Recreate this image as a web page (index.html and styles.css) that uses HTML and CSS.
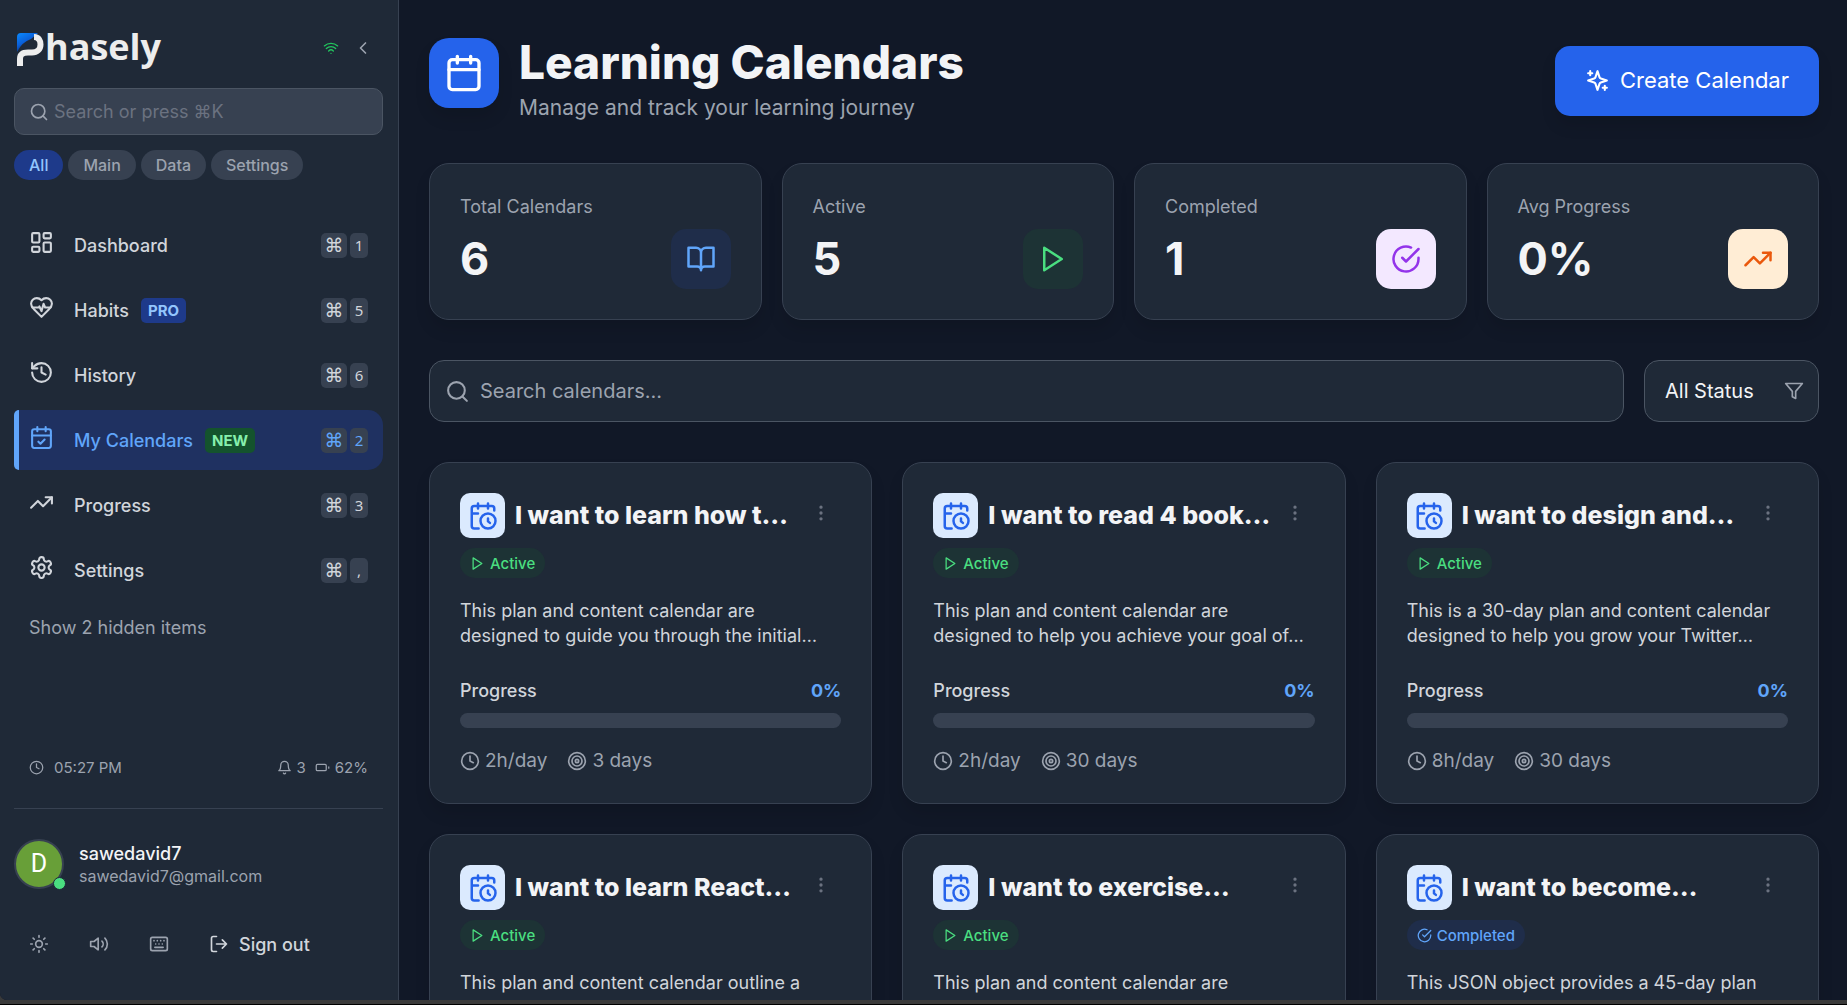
FILE: index.html
```html
<!DOCTYPE html>
<html lang="en">
<head>
<meta charset="utf-8">
<title>Learning Calendars - Phasely</title>
<meta name="viewport" content="width=device-width, initial-scale=1">
<link rel="stylesheet" href="styles.css">
</head>
<body>
<svg class="sprite" aria-hidden="true">
  <symbol id="i-wifi" viewBox="0 0 24 24"><path d="M12 20h.01M2 8.82a15 15 0 0 1 20 0M5 12.86a10 10 0 0 1 14 0M8.5 16.43a5 5 0 0 1 7 0"/></symbol>
  <symbol id="i-left" viewBox="0 0 24 24"><path d="m15 18-6-6 6-6"/></symbol>
  <symbol id="i-search" viewBox="0 0 24 24"><circle cx="11" cy="11" r="8"/><path d="m21 21-4.3-4.3"/></symbol>
  <symbol id="i-dashboard" viewBox="0 0 24 24"><rect x="3" y="3" width="7" height="9" rx="1"/><rect x="14" y="3" width="7" height="5" rx="1"/><rect x="14" y="12" width="7" height="9" rx="1"/><rect x="3" y="16" width="7" height="5" rx="1"/></symbol>
  <symbol id="i-heart" viewBox="0 0 24 24"><path d="M19 14c1.49-1.46 3-3.21 3-5.5A5.5 5.5 0 0 0 16.5 3c-1.76 0-3 .5-4.5 2-1.5-1.5-2.74-2-4.5-2A5.5 5.5 0 0 0 2 8.5c0 2.3 1.5 4.05 3 5.5l7 7Z"/><path d="M3.22 12H9.5l.5-1 2 4.5 2-7 1.5 3.5h5.27"/></symbol>
  <symbol id="i-history" viewBox="0 0 24 24"><path d="M3 12a9 9 0 1 0 9-9 9.75 9.75 0 0 0-6.74 2.74L3 8"/><path d="M3 3v5h5M12 7v5l4 2"/></symbol>
  <symbol id="i-calcheck" viewBox="0 0 24 24"><path d="M8 2v4M16 2v4M3 10h18M9 16l2 2 4-4"/><rect x="3" y="4" width="18" height="18" rx="2"/></symbol>
  <symbol id="i-calendar" viewBox="0 0 24 24"><path d="M8 2v4M16 2v4M3 10h18"/><rect x="3" y="4" width="18" height="18" rx="2"/></symbol>
  <symbol id="i-calclock" viewBox="0 0 24 24"><path d="M21 7.5V6a2 2 0 0 0-2-2H5a2 2 0 0 0-2 2v14a2 2 0 0 0 2 2h3.5M16 2v4M8 2v4M3 10h5M17.5 17.5 16 16.3V14"/><circle cx="16" cy="16" r="6"/></symbol>
  <symbol id="i-trend" viewBox="0 0 24 24"><path d="m22 7-8.500 8.500-5-5L2 17"/><path d="M16 7h6v6"/></symbol>
  <symbol id="i-settings" viewBox="0 0 24 24"><path d="M12.22 2h-.44a2 2 0 0 0-2 2v.18a2 2 0 0 1-1 1.730l-.43.25a2 2 0 0 1-2 0l-.15-.08a2 2 0 0 0-2.730.730l-.22.38a2 2 0 0 0 .730 2.730l.15.1a2 2 0 0 1 1 1.720v.51a2 2 0 0 1-1 1.740l-.15.09a2 2 0 0 0-.730 2.730l.22.38a2 2 0 0 0 2.730.730l.15-.08a2 2 0 0 1 2 0l.43.25a2 2 0 0 1 1 1.730V20a2 2 0 0 0 2 2h.44a2 2 0 0 0 2-2v-.18a2 2 0 0 1 1-1.730l.43-.25a2 2 0 0 1 2 0l.15.08a2 2 0 0 0 2.730-.730l.22-.39a2 2 0 0 0-.730-2.730l-.15-.08a2 2 0 0 1-1-1.740v-.5a2 2 0 0 1 1-1.740l.15-.09a2 2 0 0 0 .730-2.730l-.22-.38a2 2 0 0 0-2.730-.730l-.15.08a2 2 0 0 1-2 0l-.43-.25a2 2 0 0 1-1-1.730V4a2 2 0 0 0-2-2z"/><circle cx="12" cy="12" r="3"/></symbol>
  <symbol id="i-clock" viewBox="0 0 24 24"><circle cx="12" cy="12" r="10"/><path d="M12 6v6l4 2"/></symbol>
  <symbol id="i-bell" viewBox="0 0 24 24"><path d="M6 8a6 6 0 0 1 12 0c0 7 3 9 3 9H3s3-2 3-9M10.3 21a1.940 1.940 0 0 0 3.4 0"/></symbol>
  <symbol id="i-battery" viewBox="0 0 24 24"><rect x="2" y="7" width="16" height="10" rx="2"/><path d="M22 11v2"/></symbol>
  <symbol id="i-sun" viewBox="0 0 24 24"><circle cx="12" cy="12" r="4"/><path d="M12 2v2M12 20v2M4.930 4.930l1.410 1.410M17.660 17.660l1.410 1.410M2 12h2M20 12h2M6.340 17.660l-1.410 1.410M19.070 4.930l-1.410 1.410"/></symbol>
  <symbol id="i-volume" viewBox="0 0 24 24"><path d="M11 5 6 9H2v6h4l5 4zM15.540 8.460a5 5 0 0 1 0 7.070M19.070 4.930a10 10 0 0 1 0 14.140"/></symbol>
  <symbol id="i-keyboard" viewBox="0 0 24 24"><rect x="2" y="4" width="20" height="16" rx="2"/><path d="M6 8h.01M10 8h.01M14 8h.01M18 8h.01M8 12h.01M12 12h.01M16 12h.01M7 16h10"/></symbol>
  <symbol id="i-logout" viewBox="0 0 24 24"><path d="M9 21H5a2 2 0 0 1-2-2V5a2 2 0 0 1 2-2h4M16 17l5-5-5-5M21 12H9"/></symbol>
  <symbol id="i-sparkles" viewBox="0 0 24 24"><path d="m12 3-1.912 5.813a2 2 0 0 1-1.275 1.275L3 12l5.813 1.912a2 2 0 0 1 1.275 1.275L12 21l1.912-5.813a2 2 0 0 1 1.275-1.275L21 12l-5.813-1.912a2 2 0 0 1-1.275-1.275ZM5 3v4M19 17v4M3 5h4M17 19h4"/></symbol>
  <symbol id="i-book" viewBox="0 0 24 24"><path d="M2 3h6a4 4 0 0 1 4 4v14a3 3 0 0 0-3-3H2zM22 3h-6a4 4 0 0 0-4 4v14a3 3 0 0 1 3-3h7z"/></symbol>
  <symbol id="i-play" viewBox="0 0 24 24"><path d="m5 3 14 9-14 9z"/></symbol>
  <symbol id="i-check" viewBox="0 0 24 24"><path d="M22 11.080V12a10 10 0 1 1-5.930-9.140"/><path d="m9 11 3 3L22 4"/></symbol>
  <symbol id="i-filter" viewBox="0 0 24 24"><path d="M22 3H2l8 9.460V19l4 2v-8.540z"/></symbol>
  <symbol id="i-dots" viewBox="0 0 24 24"><circle cx="12" cy="5" r="1"/><circle cx="12" cy="12" r="1"/><circle cx="12" cy="19" r="1"/></symbol>
  <symbol id="i-target" viewBox="0 0 24 24"><circle cx="12" cy="12" r="10"/><circle cx="12" cy="12" r="6"/><circle cx="12" cy="12" r="2"/></symbol>
</svg>

<div class="app">
  <aside class="sidebar">
    <div class="brand-row">
      <a class="brand" href="#" aria-label="Phasely">
        <svg class="brand-mark" viewBox="0 0 28 33" aria-hidden="true">
          <defs><linearGradient id="g" x1="0" y1="0" x2="0.6" y2="1"><stop offset="0" stop-color="#0a8aff"/><stop offset="0.5" stop-color="#0a5fd8"/><stop offset="1" stop-color="#0a1f5b"/></linearGradient></defs>
          <path d="M0 19V4q0-4 4-4h17L14 6Q5 9 0 19z" fill="url(#g)"/>
          <path d="M17 4c5 0 6.500 4 6.500 7.500 0 5-3.500 8-8.500 8h-4c-6 0-8 2.500-8 6.500v7" fill="none" stroke="#ededed" stroke-width="6"/>
        </svg>
        <span>hasely</span>
      </a>
      <svg class="icon s16 wifi" aria-label="Online"><use href="#i-wifi"/></svg>
      <button class="plain" aria-label="Collapse sidebar"><svg class="icon s20"><use href="#i-left"/></svg></button>
    </div>

    <label class="side-search">
      <svg class="icon s20"><use href="#i-search"/></svg>
      <input type="search" placeholder="Search or press ⌘K" aria-label="Search menu">
    </label>

    <div class="chips">
      <button class="chip chip-on">All</button>
      <button class="chip">Main</button>
      <button class="chip">Data</button>
      <button class="chip">Settings</button>
    </div>

    <nav class="nav">
      <a class="nav-item" href="#"><svg class="icon s25"><use href="#i-dashboard"/></svg><span>Dashboard</span><span class="keys"><kbd class="cmd">⌘</kbd><kbd>1</kbd></span></a>
      <a class="nav-item" href="#"><svg class="icon s25"><use href="#i-heart"/></svg><span>Habits</span><span class="tag tag-pro">PRO</span><span class="keys"><kbd class="cmd">⌘</kbd><kbd>5</kbd></span></a>
      <a class="nav-item" href="#"><svg class="icon s25"><use href="#i-history"/></svg><span>History</span><span class="keys"><kbd class="cmd">⌘</kbd><kbd>6</kbd></span></a>
      <a class="nav-item nav-on" href="#" aria-current="page"><svg class="icon s25"><use href="#i-calcheck"/></svg><span>My Calendars</span><span class="tag tag-new">NEW</span><span class="keys"><kbd class="cmd">⌘</kbd><kbd>2</kbd></span></a>
      <a class="nav-item" href="#"><svg class="icon s25"><use href="#i-trend"/></svg><span>Progress</span><span class="keys"><kbd class="cmd">⌘</kbd><kbd>3</kbd></span></a>
      <a class="nav-item" href="#"><svg class="icon s25"><use href="#i-settings"/></svg><span>Settings</span><span class="keys"><kbd class="cmd">⌘</kbd><kbd>,</kbd></span></a>
      <button class="plain hidden-items">Show 2 hidden items</button>
    </nav>

    <div class="status">
      <svg class="icon s15"><use href="#i-clock"/></svg><span class="time">05:27 PM</span>
      <svg class="icon s15"><use href="#i-bell"/></svg><span class="alerts">3</span>
      <svg class="icon s15"><use href="#i-battery"/></svg><span>62%</span>
    </div>

    <div class="user">
      <div class="avatar">D<span class="online"></span></div>
      <div>
        <div class="user-name">sawedavid7</div>
        <div class="user-mail">sawedavid7@gmail.com</div>
      </div>
    </div>

    <div class="tools">
      <button class="tool" aria-label="Theme"><svg class="icon s20"><use href="#i-sun"/></svg></button>
      <button class="tool" aria-label="Sound"><svg class="icon s20"><use href="#i-volume"/></svg></button>
      <button class="tool" aria-label="Keyboard shortcuts"><svg class="icon s20"><use href="#i-keyboard"/></svg></button>
      <button class="tool sign-out"><svg class="icon s20"><use href="#i-logout"/></svg>Sign out</button>
    </div>
  </aside>

  <main class="main">
    <header class="page-head">
      <div class="page-icon"><svg class="icon s40"><use href="#i-calendar"/></svg></div>
      <div class="page-title">
        <h1>Learning Calendars</h1>
        <p>Manage and track your learning journey</p>
      </div>
      <button class="create"><svg class="icon s25"><use href="#i-sparkles"/></svg>Create Calendar</button>
    </header>

    <section class="stats">
      <div class="stat"><div><div class="stat-label">Total Calendars</div><div class="stat-value">6</div></div><div class="stat-icon blue"><svg class="icon s30"><use href="#i-book"/></svg></div></div>
      <div class="stat"><div><div class="stat-label">Active</div><div class="stat-value">5</div></div><div class="stat-icon green"><svg class="icon s30"><use href="#i-play"/></svg></div></div>
      <div class="stat"><div><div class="stat-label">Completed</div><div class="stat-value">1</div></div><div class="stat-icon purple"><svg class="icon s30"><use href="#i-check"/></svg></div></div>
      <div class="stat"><div><div class="stat-label">Avg Progress</div><div class="stat-value">0%</div></div><div class="stat-icon orange"><svg class="icon s30"><use href="#i-trend"/></svg></div></div>
    </section>

    <section class="filters">
      <label class="search">
        <svg class="icon s25"><use href="#i-search"/></svg>
        <input type="search" placeholder="Search calendars..." aria-label="Search calendars">
      </label>
      <label class="select">
        <select aria-label="Status"><option>All Status</option><option>Active</option><option>Completed</option></select>
        <svg class="icon s20"><use href="#i-filter"/></svg>
      </label>
    </section>

    <section class="cards">
      <article class="card">
        <div class="card-head"><div class="card-icon"><svg class="icon s30"><use href="#i-calclock"/></svg></div><h2>I want to learn how t…</h2><button class="plain more" aria-label="More"><svg class="icon s20"><use href="#i-dots"/></svg></button></div>
        <span class="badge green"><svg class="icon s15"><use href="#i-play"/></svg>Active</span>
        <p class="desc">This plan and content calendar are<br>designed to guide you through the initial…</p>
        <div class="progress-row"><span>Progress</span><strong>0%</strong></div>
        <div class="bar"></div>
        <div class="meta"><svg class="icon s20"><use href="#i-clock"/></svg><span>2h/day</span><svg class="icon s20"><use href="#i-target"/></svg><span>3 days</span></div>
      </article>
      <article class="card">
        <div class="card-head"><div class="card-icon"><svg class="icon s30"><use href="#i-calclock"/></svg></div><h2>I want to read 4 book…</h2><button class="plain more" aria-label="More"><svg class="icon s20"><use href="#i-dots"/></svg></button></div>
        <span class="badge green"><svg class="icon s15"><use href="#i-play"/></svg>Active</span>
        <p class="desc">This plan and content calendar are<br>designed to help you achieve your goal of…</p>
        <div class="progress-row"><span>Progress</span><strong>0%</strong></div>
        <div class="bar"></div>
        <div class="meta"><svg class="icon s20"><use href="#i-clock"/></svg><span>2h/day</span><svg class="icon s20"><use href="#i-target"/></svg><span>30 days</span></div>
      </article>
      <article class="card">
        <div class="card-head"><div class="card-icon"><svg class="icon s30"><use href="#i-calclock"/></svg></div><h2>I want to design and…</h2><button class="plain more" aria-label="More"><svg class="icon s20"><use href="#i-dots"/></svg></button></div>
        <span class="badge green"><svg class="icon s15"><use href="#i-play"/></svg>Active</span>
        <p class="desc">This is a 30-day plan and content calendar<br>designed to help you grow your Twitter…</p>
        <div class="progress-row"><span>Progress</span><strong>0%</strong></div>
        <div class="bar"></div>
        <div class="meta"><svg class="icon s20"><use href="#i-clock"/></svg><span>8h/day</span><svg class="icon s20"><use href="#i-target"/></svg><span>30 days</span></div>
      </article>
      <article class="card">
        <div class="card-head"><div class="card-icon"><svg class="icon s30"><use href="#i-calclock"/></svg></div><h2>I want to learn React…</h2><button class="plain more" aria-label="More"><svg class="icon s20"><use href="#i-dots"/></svg></button></div>
        <span class="badge green"><svg class="icon s15"><use href="#i-play"/></svg>Active</span>
        <p class="desc">This plan and content calendar outline a</p>
      </article>
      <article class="card">
        <div class="card-head"><div class="card-icon"><svg class="icon s30"><use href="#i-calclock"/></svg></div><h2>I want to exercise…</h2><button class="plain more" aria-label="More"><svg class="icon s20"><use href="#i-dots"/></svg></button></div>
        <span class="badge green"><svg class="icon s15"><use href="#i-play"/></svg>Active</span>
        <p class="desc">This plan and content calendar are</p>
      </article>
      <article class="card">
        <div class="card-head"><div class="card-icon"><svg class="icon s30"><use href="#i-calclock"/></svg></div><h2>I want to become…</h2><button class="plain more" aria-label="More"><svg class="icon s20"><use href="#i-dots"/></svg></button></div>
        <span class="badge blue"><svg class="icon s15"><use href="#i-check"/></svg>Completed</span>
        <p class="desc">This JSON object provides a 45-day plan</p>
      </article>
    </section>
  </main>
</div>
</body>
</html>
```
FILE: styles.css
```css
* { box-sizing: border-box; }

body {
  margin: 0;
  height: 100vh;
  overflow: hidden;
  display: flex;
  flex-direction: column;
  background: #3a3a3a;
  border-bottom: 1px solid #000;
  padding-bottom: 4px;
  font-family: Inter, "Noto Sans", sans-serif;
  font-size: 18px;
  line-height: 25px;
  color: #d1d5db;
}

button, input, select { font: inherit; color: inherit; }
button { cursor: pointer; border: 0; }
a { color: inherit; text-decoration: none; }
h1, h2, p { margin: 0; }

.sprite { display: none; }
.icon {
  flex: none;
  fill: none;
  stroke: currentColor;
  stroke-width: 2;
  stroke-linecap: round;
  stroke-linejoin: round;
}
.s15 { width: 15px; height: 15px; }
.s16 { width: 16px; height: 16px; }
.s20 { width: 20px; height: 20px; }
.s25 { width: 25px; height: 25px; }
.s30 { width: 30px; height: 30px; }
.s40 { width: 40px; height: 40px; }
.plain { background: none; padding: 0; display: flex; }

.app {
  flex: 1;
  min-height: 0;
  display: flex;
  background: #111827;
  border-bottom-left-radius: 7px;
  overflow: hidden;
}

/* Sidebar */
.sidebar {
  flex: none;
  width: 399px;
  padding: 0 15px 0 14px;
  background: #1f2937;
  border-right: 1px solid #374151;
  display: flex;
  flex-direction: column;
}
.brand-row {
  display: flex;
  align-items: center;
  height: 88px;
  padding: 8px 10px 0 3px;
}
.brand {
  display: flex;
  align-items: flex-end;
  margin-right: auto;
  padding-bottom: 3px;
  font: 700 36px/38px "Open Sans", sans-serif;
  color: #ededed;
}
.brand-mark { width: 28px; height: 33px; }
.wifi { color: #22c55e; margin-right: 14px; }
.brand-row .plain { color: #9ca3af; }

.side-search {
  display: flex;
  align-items: center;
  gap: 5px;
  height: 47px;
  padding: 0 14px;
  background: #374151;
  border: 1px solid #4b5563;
  border-radius: 10px;
  color: #9ca3af;
}
.side-search input, .search input {
  flex: 1;
  min-width: 0;
  padding: 0;
  background: none;
  border: 0;
  outline: 0;
}
.side-search input::placeholder { color: #6b7280; }

.chips { display: flex; gap: 5px; padding: 15px 0 35px; }
.chip {
  height: 30px;
  padding: 0 15px;
  border-radius: 15px;
  background: #374151;
  color: #9ca3af;
  font-size: 16px;
  font-weight: 500;
}
.chip-on { background: #1e3a8a; color: #93c5fd; }

.nav { display: flex; flex-direction: column; gap: 5px; }
.nav-item {
  display: flex;
  align-items: center;
  height: 60px;
  padding: 0 15px 0 10px;
  border-left: 5px solid transparent;
  border-radius: 15px;
  font-weight: 500;
}
.nav-item .icon { margin: 0 20px 5px 0; }
.nav-on {
  background: #1f3161;
  color: #60a5fa;
  border-left-color: #60a5fa;
  border-radius: 5px 15px 15px 5px;
}
.tag {
  height: 25px;
  margin-left: 12px;
  padding: 0 7px;
  border-radius: 5px;
  font-size: 15px;
  font-weight: 700;
}
.tag-pro { background: #1e3a8a; color: #93c5fd; }
.tag-new { background: #14532d; color: #86efac; }
.keys { display: flex; gap: 3px; margin-left: auto; }
kbd {
  min-width: 18px;
  height: 25px;
  border-radius: 5px;
  background: #374151;
  font: 400 15px/25px "Noto Sans", "DejaVu Sans", sans-serif;
  text-align: center;
}
.cmd { min-width: 26px; font: 400 19px/24px "DejaVu Sans", sans-serif; }
.hidden-items { padding: 10px 15px; color: #9ca3af; }

.status {
  display: flex;
  align-items: center;
  gap: 5px;
  margin-top: auto;
  padding: 0 15px 28px;
  font-size: 15px;
  color: #9ca3af;
}
.time { margin: 0 auto 0 5px; }
.alerts { margin-right: 4px; }
.user {
  display: flex;
  align-items: center;
  gap: 15px;
  padding: 30px 0;
  border-top: 1px solid #374151;
}
.avatar {
  position: relative;
  width: 50px;
  height: 50px;
  border: 2px solid #374151;
  border-radius: 50%;
  background: #689f38;
  color: #fff;
  font: 400 25px/46px Roboto, sans-serif;
  text-align: center;
}
.online {
  position: absolute;
  right: -4px;
  bottom: -3px;
  width: 13px;
  height: 13px;
  border: 1px solid #1f2937;
  border-radius: 50%;
  background: #4ade80;
}
.user-name { font-weight: 500; color: #f3f4f6; line-height: 23px; }
.user-mail { font-size: 16px; line-height: 22px; color: #9ca3af; }
.tools { display: flex; gap: 10px; padding: 0 0 31px; }
.tool {
  display: flex;
  align-items: center;
  gap: 10px;
  height: 50px;
  padding: 0 15px;
  background: none;
  color: #9ca3af;
}
.sign-out { font-weight: 500; color: #d1d5db; }

/* Main area */
.main {
  flex: 1;
  min-width: 0;
  padding: 38px 28px 0 30px;
  overflow-y: auto;
  scrollbar-width: none;
}
.page-head { display: flex; align-items: center; gap: 20px; }
.page-icon {
  align-self: flex-start;
  display: grid;
  place-items: center;
  width: 70px;
  height: 70px;
  border-radius: 20px;
  background: #2563eb;
  color: #fff;
  box-shadow: 0 10px 15px rgba(0, 0, 0, .1);
}
.page-title { margin-right: auto; }
h1 { font-size: 46px; line-height: 48px; font-weight: 800; color: #f3f4f6; }
.page-title p { margin-top: 7px; font-size: 21px; line-height: 30px; color: #9ca3af; }
.create {
  display: flex;
  align-items: center;
  gap: 10px;
  height: 70px;
  padding: 0 30px;
  border-radius: 15px;
  background: #2563eb;
  color: #fff;
  font-size: 22px;
  box-shadow: 0 10px 15px rgba(0, 0, 0, .1);
}

.stats {
  display: grid;
  grid-template-columns: repeat(4, 1fr);
  gap: 20px;
  margin-top: 40px;
}
.stat, .card {
  padding: 30px;
  background: #1f2937;
  border: 1px solid #374151;
  border-radius: 20px;
  box-shadow: 0 10px 15px rgba(0, 0, 0, .1);
}
.stat { display: flex; justify-content: space-between; align-items: flex-end; }
.stat-label { color: #9ca3af; }
.stat-value { margin-top: 10px; font-size: 45px; line-height: 60px; font-weight: 700; color: #f3f4f6; }
.stat-icon {
  display: grid;
  place-items: center;
  width: 60px;
  height: 60px;
  border-radius: 15px;
}
.blue { background: #1f2d4a; color: #60a5fa; }
.green { background: #1d3335; color: #4ade80; }
.purple { background: #f3e8ff; color: #9333ea; }
.orange { background: #ffedd5; color: #ea580c; }

.filters { display: flex; gap: 20px; margin: 40px 0; }
.search, .select {
  display: flex;
  align-items: center;
  height: 62px;
  background: #1f2937;
  border: 1px solid #4b5563;
  border-radius: 15px;
  font-size: 20px;
  color: #9ca3af;
}
.search { flex: 1; gap: 10px; padding: 0 15px; }
.search input::placeholder { color: #9ca3af; }
.select { flex: none; width: 175px; padding: 0 14px 0 20px; }
.select select {
  flex: 1;
  min-width: 0;
  padding: 0;
  appearance: none;
  background: none;
  border: 0;
  outline: 0;
  color: #f3f4f6;
}

.cards { display: grid; grid-template-columns: repeat(3, 1fr); gap: 30px; }
.card-head { display: flex; align-items: center; gap: 10px; }
.card-icon {
  display: grid;
  place-items: center;
  width: 45px;
  height: 45px;
  border-radius: 10px;
  background: #dbeafe;
  color: #2563eb;
}
h2 { margin-right: auto; font-size: 25px; line-height: 35px; font-weight: 800; color: #f3f4f6; white-space: nowrap; }
.more { margin-right: 10px; padding-bottom: 5px; color: #6b7280; }
.badge {
  display: inline-flex;
  align-items: center;
  gap: 5px;
  height: 30px;
  margin-top: 10px;
  padding: 0 10px;
  border-radius: 15px;
  font-size: 15px;
  font-weight: 500;
  vertical-align: top;
}
.desc { margin-top: 20px; white-space: nowrap; }
.progress-row { display: flex; justify-content: space-between; margin-top: 30px; font-weight: 500; }
.progress-row strong { font-weight: 700; color: #60a5fa; }
.bar { height: 15px; margin: 10px 0 20px; border-radius: 8px; background: #374151; }
.meta { display: flex; align-items: center; gap: 5px; font-size: 19px; color: #9ca3af; }
.meta span { margin-right: 15px; }
```
